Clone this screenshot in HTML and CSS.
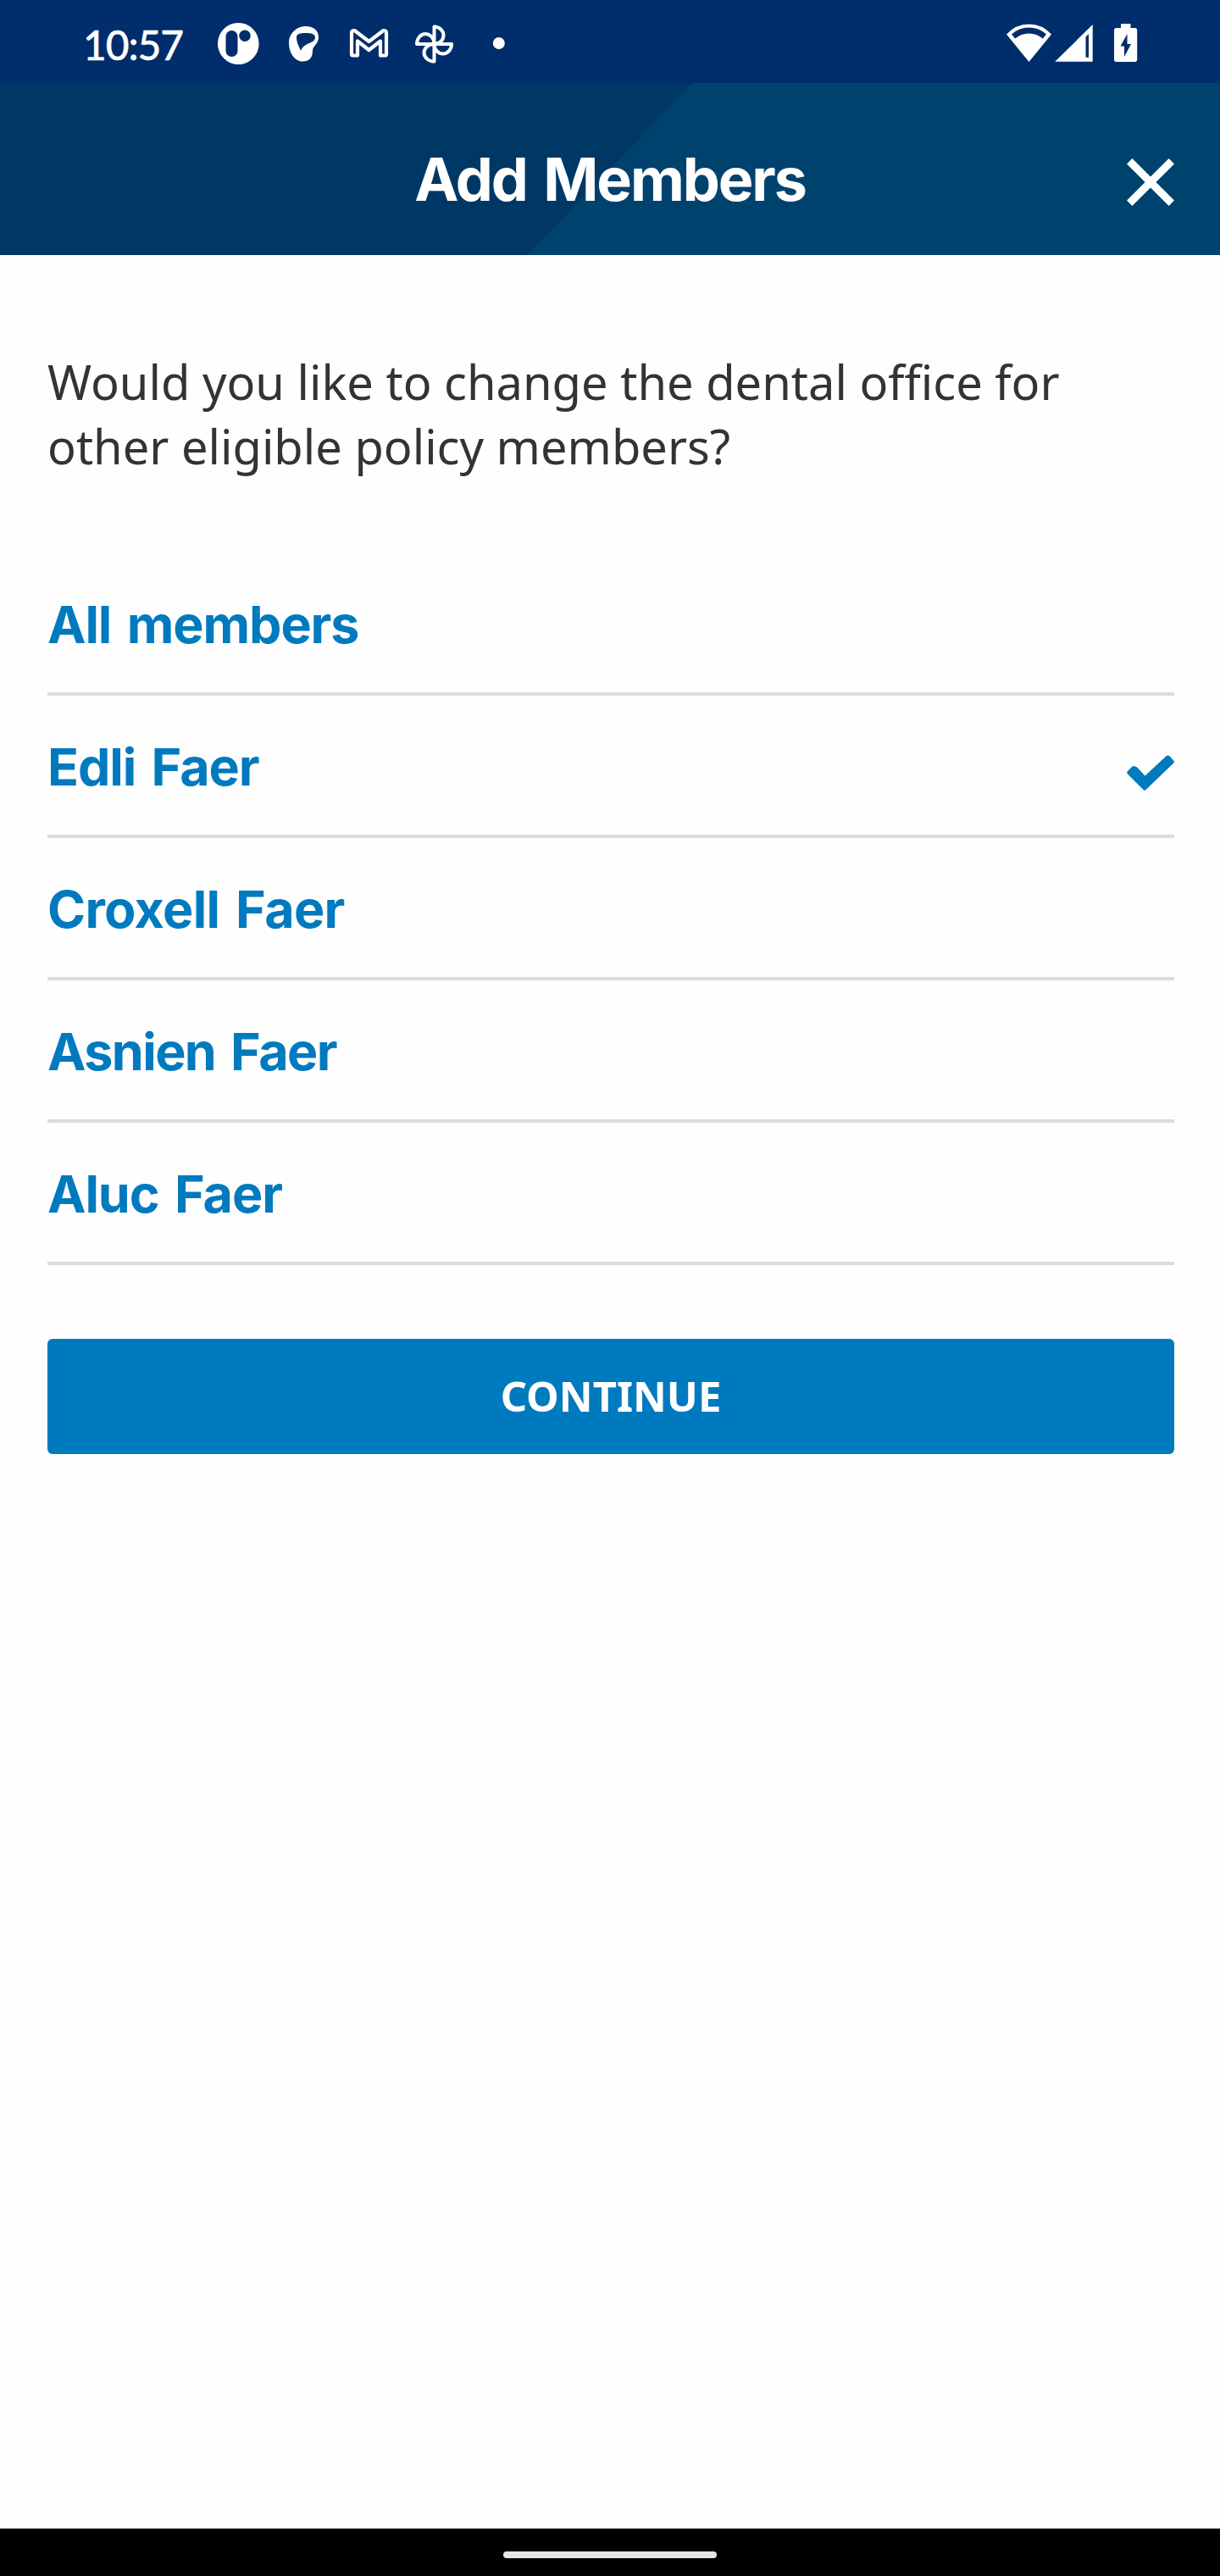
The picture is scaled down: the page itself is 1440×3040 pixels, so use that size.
FILE: index.html
```html
<!DOCTYPE html>
<html lang="en">
<head>
<meta charset="utf-8">
<title>Add Members</title>
<link rel="stylesheet" href="styles.css">
</head>
<body>
<div class="screen">
  <div class="status">
    <span class="time">10:57</span>
    <svg class="status-left" width="350" height="98" viewBox="250 0 350 98">
      <path fill="#fff" fill-rule="evenodd" d="M281.3 27a24.3 24.5 0 1 0 .01 0zM273.500 36a7 7 0 0 1 7 7v17a7 7 0 0 1-14 0v-17a7 7 0 0 1 7-7zM289 35.500a6.700 6.700 0 1 1-.01 0z" class="badge"/>
      <path fill="#fff" fill-rule="evenodd" d="M361 31c9 0 15 5 15 13 0 8-7 10-7 16 0 8-4 12.500-12 12.500-9 0-16-10-16-22 0-11 9-19.500 20-19.500zM350 44c0 7 3 10 5 16 2-5 5-7 10-9 5-2 7-4 7-7 0-4-5-5-11-5-7 0-11 1-11 5z"/>
      <path fill="none" stroke="#fff" stroke-width="4.200" stroke-linejoin="round" d="M415 38.500q0-2.500 3.500-2.500L435.500 49 452.500 36q3.500 0 3.500 2.500v25.500q0 1.500-1.500 1.500H449V48.500L435.500 59 422 48.500v17h-5.500q-1.500 0-1.500-1.500z"/>
      <g fill="none" stroke="#fff" stroke-width="4" stroke-linejoin="round">
        <path d="M512.500 52V31.500A11 10.250 0 0 1 512.500 52"/>
        <path d="M512.500 52H533A10.250 11.500 0 0 1 512.500 52"/>
        <path d="M512.500 52V72.500A12 10.250 0 0 1 512.500 52"/>
        <path d="M512.500 52H492A10.250 12 0 0 1 512.500 52"/>
      </g>
      <circle cx="588.800" cy="51" r="7" fill="#fff"/>
    </svg>
    <svg class="status-right" width="160" height="98" viewBox="1185 0 160 98">
      <path fill="#fff" fill-rule="evenodd" d="M1188 40.500Q1199 28.500 1214.500 28.500T1241 40.500L1214.500 73zM1194 40.500l4.200 5q7-6 16.300-6t16.300 6l4.200-5q-8.500-8-20.500-8t-20.500 8z"/>
      <path fill="#fff" fill-rule="evenodd" d="M1289.700 29v43.700h-44.500zM1285 40l-3.500 3.500v24.300h3.500z"/>
      <path fill="#fff" fill-rule="evenodd" d="M1323 28h11.500v5h5q2.700 0 2.700 2.700v34.600q0 2.700-2.700 2.700h-21.800q-2.700 0-2.700-2.700V35.700q0-2.700 2.700-2.700h5.300zM1330.500 40l-8 14.500h4.500V67l8-15h-4.500z"/>
    </svg>
  </div>
  <header class="header">
    <h1 class="title">Add Members</h1>
    <svg class="close" width="56" height="56" viewBox="0 0 56 56"><path d="M3.200 3.200l49.600 49.600M52.800 3.200L3.200 52.800" stroke="#fff" stroke-width="9"/></svg>
  </header>
  <main class="content">
    <p class="question">Would you like to change the dental office for<br>other eligible policy members?</p>
    <ul class="members">
      <li class="member"><span>All members</span></li>
      <li class="member"><span>Edli Faer</span>
        <svg class="check" width="56" height="42" viewBox="0 0 56 42"><path d="M9.300 13.200Q7.500 12.500 5.500 14.500L1 19q-1.500 1.800 0 3.600L19.500 41q1.500 1.500 3 0L55 9.800q1.700-1.800 0-3.600L50.500 1.300q-2-1.800-4 0L21.500 24.500 11.800 14.300z" fill="#007abe"/></svg>
      </li>
      <li class="member"><span class="loose">Croxell Faer</span></li>
      <li class="member"><span class="tight">Asnien Faer</span></li>
      <li class="member"><span>Aluc Faer</span></li>
    </ul>
    <button class="continue">CONTINUE</button>
  </main>
  <div class="navbar"><div class="pill"></div></div>
</div>
</body>
</html>
```
FILE: styles.css
```css
* { box-sizing: border-box; margin: 0; padding: 0; }
body { width: 1440px; background: #fefefe; }
.screen { display: flex; flex-direction: column; height: 3040px; }
.status { display: flex; height: 98px; background: #002d6c; color: #fff; padding-left: 98px; padding-right: 95px; }
.time { width: 152px; font: 500 48px/105px "Lato", sans-serif; letter-spacing: -1.1px; -webkit-text-stroke: 0.4px #fff; white-space: nowrap; }
.status-right { margin-left: auto; }
.header { display: grid; grid-template-columns: 56px 1fr 56px; align-items: center; height: 203px; padding: 0 54px; background: linear-gradient(133.800deg, #003865 0, #003865 50%, #00426e 50%); }
.title { grid-column: 2; text-align: center; color: #fff; font: 700 70px/84px "Inter", sans-serif; letter-spacing: -2.1px; word-spacing: 5px; padding-top: 25px; }
.close { margin-top: 30px; }
.content { flex: 1; padding: 111px 54px 0 56px; }
.question { font: 400 56px/76px "Noto Sans", sans-serif; color: #333; white-space: nowrap; }
.members { list-style: none; margin-top: 89px; }
.member { display: flex; justify-content: space-between; height: 168px; border-bottom: 4px solid #dcdcdc; font: 700 61px/168px "Inter", sans-serif; letter-spacing: -1.1px; word-spacing: 5px; color: #007abe; white-space: nowrap; }
.loose { letter-spacing: -0.7px; }
.tight { letter-spacing: -1.6px; }
.check { margin-top: 70px; }
.continue { display: block; width: 1330px; height: 136px; margin-top: 87px; border: 0; border-radius: 6px; background: #007abe; color: #fff; font: 700 49px/134px "Noto Sans", sans-serif; padding-bottom: 2px; }
.navbar { height: 56px; background: #000; display: flex; justify-content: center; padding-top: 27px; }
.pill { width: 252px; height: 8px; border-radius: 4px; background: #e6e6e6; }
```
